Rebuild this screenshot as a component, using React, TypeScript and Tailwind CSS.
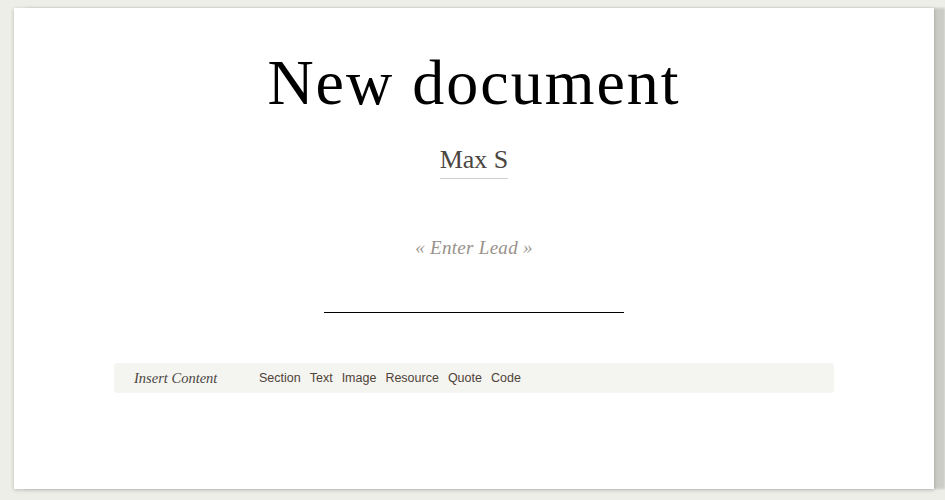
import React from "react";

const serif = { fontFamily: '"Liberation Serif", "Times New Roman", serif' };
const sans = { fontFamily: '"Liberation Sans", Arial, sans-serif' };

const insertItems = ["Section", "Text", "Image", "Resource", "Quote", "Code"];

export default function App() {
  return (
    <div className="h-[500px] w-full bg-[#eeeee8] pt-[8px] pl-[14px] pr-[11px] pb-[11px] overflow-hidden">
      <div className="h-full bg-white shadow-[0_1px_4px_rgba(0,0,0,0.22),11px_0_2px_rgba(0,0,0,0.14)] flex flex-col items-center pt-[43px]">
        {/* Title */}
        <h1
          className="text-[64px] leading-none tracking-[2px] text-black"
          style={serif}
        >
          New document
        </h1>

        {/* Author */}
        <div className="mt-[32px]">
          <span
            className="block text-[26px] leading-none text-[#4b453f] pb-[5px] border-b border-[#cfcfcf]"
            style={serif}
          >
            Max S
          </span>
        </div>

        {/* Lead */}
        <p
          className="mt-[59px] text-[19px] leading-none italic text-[#99928b] tracking-[0.3px]"
          style={serif}
        >
          « Enter Lead »
        </p>

        {/* Separator */}
        <div className="mt-[55px] w-[300px] h-px bg-black" />

        {/* Insert toolbar */}
        <div className="mt-[50px] w-[720px] h-[30px] rounded-[4px] bg-[#f4f4f0] flex items-center pl-[20px]">
          <span
            className="w-[125px] pt-[2px] text-[14.5px] italic text-[#4a4642]"
            style={serif}
          >
            Insert Content
          </span>
          <div className="flex items-center gap-[9px] pt-[1px] text-[12.5px] text-[#4f4238]" style={sans}>
            {insertItems.map((item) => (
              <span key={item} className="cursor-pointer">
                {item}
              </span>
            ))}
          </div>
        </div>
      </div>
    </div>
  );
}
